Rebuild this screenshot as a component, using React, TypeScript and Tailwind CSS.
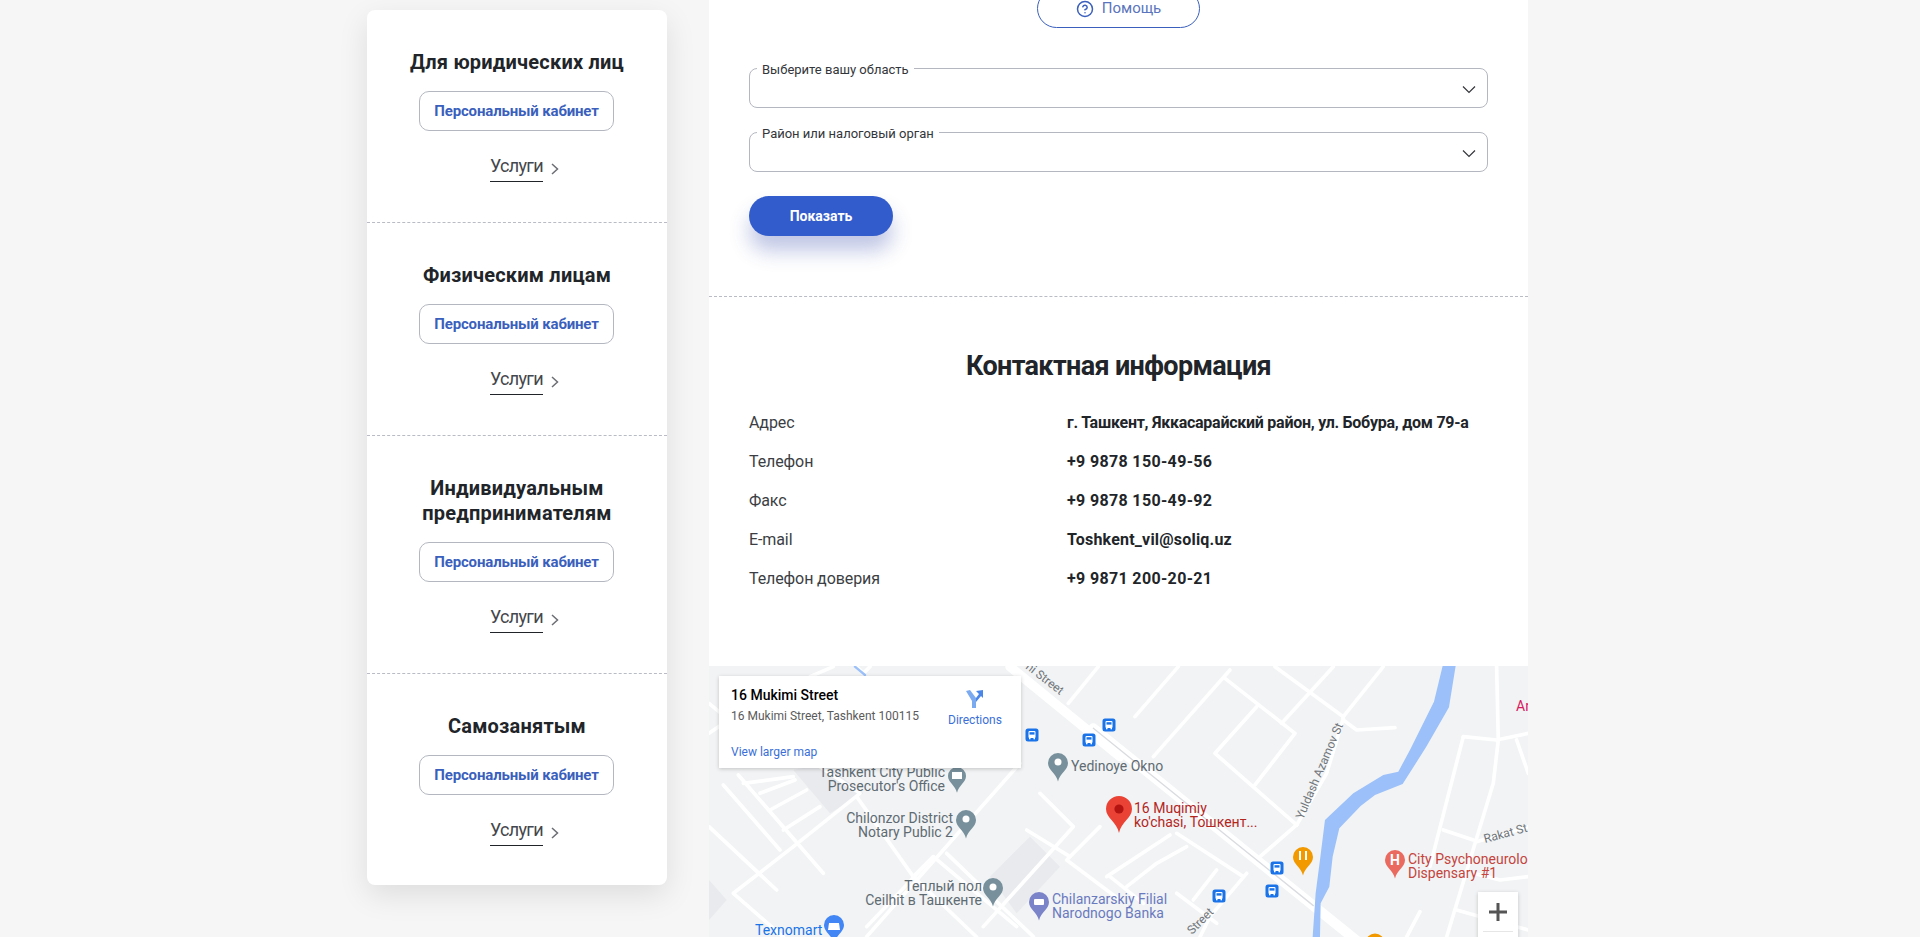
import { CircleHelp } from "lucide-react";

const cards = [
  { title: ["Для юридических лиц"] },
  { title: ["Физическим лицам"] },
  { title: ["Индивидуальным", "предпринимателям"] },
  { title: ["Самозанятым"] },
];

const contacts = [
  { label: "Адрес", value: "г. Ташкент, Яккасарайский район, ул. Бобура, дом 79-а", cls: "tracking-[-0.26px]" },
  { label: "Телефон", value: "+9 9878 150-49-56", cls: "tracking-[0.35px]" },
  { label: "Факс", value: "+9 9878 150-49-92", cls: "tracking-[0.35px]" },
  { label: "E-mail", value: "Toshkent_vil@soliq.uz", cls: "tracking-[0.2px]" },
  { label: "Телефон доверия", value: "+9 9871 200-20-21", cls: "tracking-[0.35px]" },
];

// roads traced on the 3x crops of the map
const roadsLeft = [
  "500,830 960,310",
  "1105,130 1195,20",
  "70,375 240,570",
  "27,500 230,690",
  "115,345 370,640",
  "280,560 100,700 250,831",
  "280,560 480,400 360,320",
  "470,410 640,650 830,831",
  "130,370 280,350",
  "180,400 285,360",
  "210,450 320,390",
  "250,510 360,440",
  "640,650 700,590 950,800",
  "700,590 500,800",
  "740,580 1000,830",
  "1020,400 1120,500 850,800",
  "980,510 1110,590",
  "1200,500 1100,600 1260,720",
  "27,220 160,130",
  "330,50 400,20",
  "27,130 100,190",
  "470,20 490,40 510,20",
];

const roadsRight = [
  "390,30 160,290",
  "105,170 235,20",
  "375,55 585,220 465,375",
  "470,140 345,280 590,495",
  "525,20 730,170",
  "700,20 545,190",
  "850,20 730,170 730,180 770,210 885,203",
  "590,495 480,590",
  "730,175 680,340 590,495",
  "1190,20 1195,240 1180,370 1040,831",
  "1090,230 1190,240 1285,220",
  "1090,230 990,620",
  "1030,510 1120,540",
  "1250,240 1285,340",
  "1130,545 1285,500",
  "1120,640 1200,660 1285,650",
  "210,525 20,650",
  "260,560 170,610 80,680",
  "30,650 130,730",
  "230,520 430,650",
  "350,630 280,720",
  "230,700 350,790",
  "440,640 330,770 300,831",
  "960,755 920,831",
  "1070,750 1285,810",
];

const buses = [
  [1032, 735],
  [1089, 740],
  [1109, 725],
  [1277, 868],
  [1272, 891],
  [1219, 896],
];

function Bus({ x, y }: { x: number; y: number }) {
  return (
    <g transform={`translate(${x} ${y})`}>
      <rect x={-6.5} y={-6.5} width={13} height={13} rx={2.5} fill="#1a73e8" />
      <rect x={-3.5} y={-4} width={7} height={7} rx={1} fill="#fff" />
      <rect x={-2.5} y={-2.8} width={5} height={2.4} fill="#1a73e8" />
      <rect x={-3} y={3} width={1.5} height={1.3} fill="#fff" />
      <rect x={1.5} y={3} width={1.5} height={1.3} fill="#fff" />
    </g>
  );
}

function Pin({ x, y, color, r = 10 }: { x: number; y: number; color: string; r?: number }) {
  return (
    <path
      transform={`translate(${x} ${y})`}
      d={`M0 ${r * 1.85}C-2 ${r * 1}-${r} ${r * 0.7}-${r} 0A${r} ${r} 0 0 1 ${r} 0C${r} ${r * 0.7} 2 ${r} 0 ${r * 1.85}Z`}
      fill={color}
    />
  );
}

function Label({ x, y, lines, color, anchor = "start", size = 14 }: { x: number; y: number; lines: string[]; color: string; anchor?: "start" | "end"; size?: number }) {
  return (
    <text x={x} y={y} fill={color} fontSize={size} textAnchor={anchor} fontFamily="Roboto, sans-serif">
      {lines.map((l, i) => (
        <tspan key={l} x={x} dy={i === 0 ? 0 : 14}>
          {l}
        </tspan>
      ))}
    </text>
  );
}

function MapDrawing() {
  return (
    <svg viewBox="709 666 819 271" className="block w-full h-full">
      <rect x={709} y={666} width={819} height={271} fill="#f1f3f4" />
      <g transform="translate(700 660) scale(0.3333)">
        <path d="M280 330 390 460 490 400 370 310Z M870 650 990 530 1080 620 950 760Z" fill="#e8eaed" />
        <path d="M27 660 80 720 27 780Z" fill="#e8eaed" />
      </g>
      <g transform="translate(700 660) scale(0.3333)" fill="none" stroke="#fff" strokeWidth={11} strokeLinecap="round" strokeLinejoin="round">
        {roadsLeft.map((p) => (
          <polyline key={p} points={p} />
        ))}
        <polyline points="930,20 1260,290" strokeWidth={28} />
        <polyline points="465,20 495,45" stroke="#9cc0f9" strokeWidth={7} />
      </g>
      <g transform="translate(1100 660) scale(0.3333)" fill="none" stroke="#fff" strokeWidth={11} strokeLinecap="round" strokeLinejoin="round">
        {roadsRight.map((p) => (
          <polyline key={p} points={p} />
        ))}
        <polyline points="-20,205 780,850" strokeWidth={30} />
        <polyline points="-20,205 640,737" stroke="#dadce0" strokeWidth={4} />
        <polygon
          points="1028,18 1002,125 930,270 895,335 850,345 760,400 675,480 660,600 647,700 638,831 660,831 662,730 688,680 698,590 718,505 782,438 825,405 908,372 978,262 1047,142 1067,18"
          fill="#9cc0f9"
          stroke="none"
        />
      </g>

      {buses.map(([x, y]) => (
        <Bus key={`${x}-${y}`} x={x} y={y} />
      ))}

      <Label x={945} y={777} anchor="end" lines={["Tashkent City Public", "Prosecutor's Office"]} color="#5f6b73" />
      <Pin x={957} y={776} color="#78909c" r={9} />
      <rect x={952} y={772} width={10} height={7} fill="#fff" />
      <Label x={953} y={823} anchor="end" lines={["Chilonzor District", "Notary Public 2"]} color="#5f6b73" />
      <Pin x={966} y={820} color="#78909c" r={10} />
      <circle cx={966} cy={819} r={3.5} fill="#fff" />
      <Label x={1071} y={771} lines={["Yedinoye Okno"]} color="#5f6b73" />
      <Pin x={1058} y={763} color="#78909c" r={10} />
      <circle cx={1058} cy={762} r={3.5} fill="#fff" />
      <Label x={982} y={891} anchor="end" lines={["Теплый пол", "Ceilhit в Ташкенте"]} color="#5f6b73" />
      <Pin x={993} y={888} color="#78909c" r={10} />
      <circle cx={993} cy={887} r={3.5} fill="#fff" />
      <Label x={1052} y={904} lines={["Chilanzarskiy Filial", "Narodnogo Banka"]} color="#6a7abf" />
      <Pin x={1039} y={902} color="#7b83c9" r={10} />
      <rect x={1034} y={899} width={10} height={6} rx={1} fill="#fff" />
      <Label x={755} y={935} lines={["Texnomart"]} color="#1a73e8" />
      <Pin x={834} y={925} color="#4285f4" r={10} />
      <path d="M829 923h10l1 7h-12Z" fill="#fff" />

      <Pin x={1119} y={809} color="#ea4335" r={13} />
      <circle cx={1119} cy={809} r={4.6} fill="#b31412" />
      <Label x={1134} y={813} lines={["16 Muqimiy", "ko'chasi, Тошкент..."]} color="#b3261e" />

      <Pin x={1303} y={857} color="#f29900" r={10} />
      <path d="M1300 851v9M1306 851v9" stroke="#fff" strokeWidth={2} />
      <Pin x={1395} y={860} color="#ea6a60" r={10} />
      <text x={1395} y={865} fontSize={14} fontWeight={700} fill="#fff" textAnchor="middle" fontFamily="Roboto, sans-serif">H</text>
      <Label x={1408} y={864} lines={["City Psychoneurolo", "Dispensary #1"]} color="#c5443d" />
      <circle cx={1375} cy={943} r={9.5} fill="#f29900" />
      <Label x={1516} y={711} lines={["Ar"]} color="#d81b60" />

      <text transform="translate(1303 820) rotate(-67)" fontSize={12} fill="#70757a" fontFamily="Roboto, sans-serif">Yuldash Azamov St</text>
      <text transform="translate(1485 843) rotate(-15)" fontSize={12} fill="#70757a" fontFamily="Roboto, sans-serif">Rakat St</text>
      <text transform="translate(1025 668) rotate(38)" fontSize={12} fill="#70757a" fontFamily="Roboto, sans-serif">ni Street</text>
      <text transform="translate(1192 935) rotate(-45)" fontSize={12} fill="#70757a" fontFamily="Roboto, sans-serif">Street</text>
    </svg>
  );
}

export default function App() {
  return (
    <div className="h-[937px] overflow-hidden bg-[#f6f6f6] font-['Roboto',sans-serif] text-[#212529]">
      <div className="flex items-start pl-[367px]">
        <aside className="mt-[10px] w-[300px] rounded-lg bg-white shadow-[0_10px_30px_rgba(0,0,0,0.1)]">
          {cards.map((card, i) => (
            <section
              key={card.title[0]}
              className={`flex flex-col items-center pt-[40px] ${i < cards.length - 1 ? "border-b border-dashed border-[#b9bcc4] pb-[39px]" : "pb-[38px]"}`}
            >
              <h3 className="text-center text-[20px] leading-[25px] font-bold tracking-[0.2px]">
                {card.title.map((t) => (
                  <div key={t}>{t}</div>
                ))}
              </h3>
              <button className="mt-[16px] mr-[1px] h-[40px] w-[195px] rounded-[10px] border border-[#b4b7c0] bg-white text-[15px] font-bold tracking-[-0.15px] text-[#3a5fbd]">
                Персональный кабинет
              </button>
              <a className="relative mt-[20px] mr-[1px] block h-[32px]">
                <span className="block h-[31px] border-b border-[#212529] text-[18px] leading-[29px] tracking-[-0.7px] text-[#44474c]">
                  Услуги
                </span>
                <svg className="absolute top-[12px] left-[calc(100%+8px)]" width="8" height="12" viewBox="0 0 8 12" fill="none" stroke="#6b6e73" strokeWidth="1.5">
                  <path d="M1 1l5.5 5L1 11" />
                </svg>
              </a>
            </section>
          ))}
        </aside>

        <main className="ml-[42px] w-[819px] bg-white">
          <div className="flex justify-center">
            <button className="-mt-[11px] flex h-[39px] w-[163px] items-center justify-center gap-[8px] rounded-[20px] border border-[#3a5fbd] text-[15px] text-[#5a75bd]">
              <CircleHelp size={18} strokeWidth={2} className="text-[#3a5fbd]" />
              Помощь
            </button>
          </div>

          <div className="border-b border-dashed border-[#b9bcc4] px-[40px] pt-[34px] pb-[60px]">
            {["Выберите вашу область", "Район или налоговый орган"].map((label) => (
              <fieldset key={label} className="relative mb-[18px] h-[46px] rounded-[8px] border border-[#b4b7c0] pl-[7px]">
                <legend className="px-[5px] text-[13px] leading-[13px] text-[#33363a]">
                  <span className="relative top-[1px]">{label}</span>
                </legend>
                <svg className="absolute top-[10px] right-[11px]" width="14" height="9" viewBox="0 0 14 9" fill="none" stroke="#33363a" strokeWidth="1.2">
                  <path d="M1 1.5l6 6 6-6" />
                </svg>
              </fieldset>
            ))}
            <button className="mt-[6px] h-[40px] w-[144px] rounded-[20px] bg-[#325ccb] pt-[1px] text-[14px] font-bold text-white shadow-[0_15px_20px_rgba(50,70,170,0.3)]">
              Показать
            </button>
          </div>

          <div className="h-[369px] px-[40px] pt-[49px]">
            <h2 className="text-center text-[27px] leading-[40px] font-bold tracking-[-0.65px]">Контактная информация</h2>
            <dl className="mt-[17px]">
              {contacts.map((row) => (
                <div key={row.label} className="flex h-[39px] items-center text-[16px]">
                  <dt className="w-[318px] tracking-[-0.1px] text-[#3b3e43]">{row.label}</dt>
                  <dd className={`font-bold whitespace-nowrap ${row.cls}`}>{row.value}</dd>
                </div>
              ))}
            </dl>
          </div>

          <div className="relative h-[271px] overflow-hidden">
            <MapDrawing />
            <div className="absolute top-[10px] left-[10px] h-[92px] w-[302px] bg-white shadow-[0_1px_4px_rgba(0,0,0,0.2)]">
              <div className="absolute top-[10px] left-[12px] text-[14px] leading-[18px] font-medium text-black">16 Mukimi Street</div>
              <div className="absolute top-[32px] left-[12px] text-[12px] leading-[16px] text-[#5b5b5b]">16 Mukimi Street, Tashkent 100115</div>
              <div className="absolute top-[68px] left-[12px] text-[12px] leading-[16px] text-[#3a6fd8]">View larger map</div>
              <svg className="absolute top-[13px] left-[245px]" width="20" height="20" viewBox="0 0 20 20">
                <path d="M2 2 6 1 12 9V19H8V12Z" fill="#7baaf0" />
                <path d="M12 9 15 5 12 2 19 1V9L17 7 12 13Z" fill="#4a86e8" />
              </svg>
              <div className="absolute top-[36px] left-[229px] text-[12px] leading-[16px] text-[#3a6fd8]">Directions</div>
            </div>
            <div className="absolute top-[226px] left-[769px] h-[60px] w-[40px] bg-white shadow-[0_1px_4px_rgba(0,0,0,0.2)]">
              <svg className="mx-auto mt-[11px]" width="18" height="18" viewBox="0 0 18 18" fill="#555">
                <path d="M7.5 0h3v7.5H18v3h-7.5V18h-3v-7.5H0v-3h7.5Z" />
              </svg>
              <div className="mx-[5px] mt-[10px] h-px bg-[#e6e6e6]" />
            </div>
          </div>
        </main>
      </div>
    </div>
  );
}
